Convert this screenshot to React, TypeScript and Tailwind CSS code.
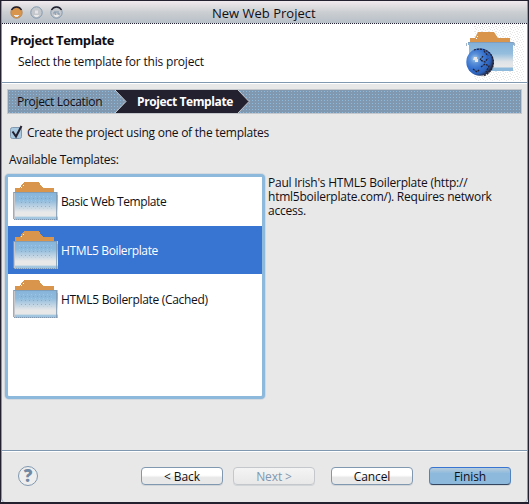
import React from "react";

function Folder({ className = "" }: { className?: string }) {
  return (
    <svg className={className} width="48" height="40" viewBox="0 0 48 40" shapeRendering="crispEdges">
      <defs>
        <linearGradient id="folderFront" x1="0" y1="0" x2="0" y2="1">
          <stop offset="0" stopColor="#86b4da" />
          <stop offset="0.3" stopColor="#8fbbdd" />
          <stop offset="0.72" stopColor="#e8e8e8" />
          <stop offset="0.86" stopColor="#e8e8e8" />
          <stop offset="0.9" stopColor="#a5c8e0" />
          <stop offset="1" stopColor="#9cc1de" />
        </linearGradient>
        <pattern id="folderGrain" width="4" height="4" patternUnits="userSpaceOnUse">
          <rect width="1" height="1" fill="#8098b0" />
          <rect x="2" y="2" width="1" height="1" fill="#c4c8cc" />
        </pattern>
      </defs>
      <path d="M2 10V6h5l2-4 2-2h14l2 2 3 4h11v4z" fill="#d8954b" />
      <rect x="1" y="10" width="44" height="28" fill="url(#folderFront)" />
      <rect x="6" y="14" width="34" height="13" fill="url(#folderGrain)" opacity=".6" />
      <path d="M0 10.500h45M0.500 11v26M43.500 11v26" stroke="#8098b0" strokeOpacity=".8" fill="none" />
      <path d="M44.500 10v3M1.500 11v26" stroke="#c4c8cc" />
      <path d="M1 37.500h43" stroke="#8098b0" strokeDasharray="1 1" />
      <path d="M10 3h1v1h-1zM8 5h1v1H8z" fill="#fff" />
    </svg>
  );
}

function ProjectIcon() {
  return (
    <svg width="58" height="57" viewBox="0 0 58 57">
      <defs>
        <linearGradient id="projectFront" x1="0" y1="0" x2="0" y2="1">
          <stop offset="0" stopColor="#80afd8" />
          <stop offset=".4" stopColor="#94bddd" />
          <stop offset=".68" stopColor="#dfe3e7" />
          <stop offset=".86" stopColor="#e8e8e8" />
          <stop offset=".9" stopColor="#8cb9dc" />
        </linearGradient>
        <radialGradient id="globe" cx=".32" cy=".38" r=".7">
          <stop offset="0" stopColor="#a8cde8" />
          <stop offset=".25" stopColor="#5b91d8" />
          <stop offset=".5" stopColor="#3874d1" />
          <stop offset=".8" stopColor="#2c60b8" />
          <stop offset="1" stopColor="#232030" />
        </radialGradient>
        <pattern id="speckle" width="7" height="5" patternUnits="userSpaceOnUse">
          <path d="M0 0h1v1H0zM3 0h1v1H3zM5 1h1v1H5zM1 2h2v1H1zM4 3h1v1H4zM6 3h1v1H6zM2 4h1v1H2z" fill="#e8e8e8" />
        </pattern>
      </defs>
      <rect x="8" width="50" height="57" fill="url(#speckle)" shapeRendering="crispEdges" />
      <g transform="translate(0 8)">
        <path d="M4 11V6h5l3-6h16l4 6h12v5z" fill="#d8954b" />
        <path d="M2 10h46v3h-1v26H3V13H2z" fill="url(#projectFront)" />
        <path d="M2 10.500h45M.5 11v3M48.500 11v3" stroke="#8098b0" opacity=".7" />
        <circle cx="14" cy="30" r="13.700" fill="url(#globe)" />
        <path d="M8 18c6-2 16-1 19 9 2 8-3 15-10 17M17 24l-3 4 5 2 3-4M15 35l4-3 4 2-3 6M7 37l4 3 2-2M18 19l4 5" fill="none" stroke="#232030" strokeWidth="1.200" strokeDasharray="2 1" />
        <path d="M8 25h3v2h1v3H9v-2H7z" fill="#e8e8e8" />
        <path d="M11 4h1v1h-1zM10 6h1v1h-1z" fill="#fff" />
      </g>
    </svg>
  );
}

function Light({ orange = false, dark = false }: { orange?: boolean; dark?: boolean }) {
  return (
    <svg width="13" height="13" viewBox="0 0 13 13">
      <circle cx="6.500" cy="6.500" r="5.700" fill={orange ? "#d8954b" : "#c4c8cc"} stroke={orange ? "#b0895f" : "#8098b0"} />
      {(orange || dark) && <path d="M1.500 4a5.700 5.700 0 0 1 10 0" fill="none" stroke="#232030" strokeWidth="1.500" />}
      <path d="M4 9.500h5M5 10.500h3" stroke="#e8e8e8" />
      {dark && <path d="M4 8v-2h3M8 5v3h2" stroke="#8098b0" fill="none" />}
      {dark && <path d="M5.500 6v3" stroke="#d8954b" />}
      {!orange && !dark && <path d="M5 4.500h3v3H5z" fill="#e4e4e6" />}
    </svg>
  );
}

function TemplateRow({ label, selected = false, tracking }: { label: string; selected?: boolean; tracking: string }) {
  return (
    <div className={`flex h-[49px] items-start border-b border-white ${selected ? "bg-[#3874d1] text-white" : "bg-white"}`}>
      <Folder className="ml-[5px] mt-[5px] shrink-0" />
      <span className={`mt-[17px] leading-4 ${tracking}`}>{label}</span>
    </div>
  );
}

function PushButton({ label, kind = "normal" }: { label: string; kind?: "normal" | "disabled" | "primary" }) {
  const look = {
    normal: "border-[#8098b0] bg-linear-to-b from-white from-45% to-[#e8e8e8] to-60%",
    disabled: "border-[#c4c8cc] bg-linear-to-b from-[#f4f4f4] to-[#e8e8e8] text-[#8098b0]",
    primary: "border-[#5182bd] border-t-[#3874d1] border-b-[#34465f] bg-linear-to-b from-[#b7cbdc] via-[#8cb9dc] via-35% to-[#8cb9dc]",
  }[kind];
  return <button className={`h-[18px] w-[82px] rounded-[4px] border text-center leading-[17px] tracking-[-0.1px] shadow-[0_1px_0_#d2d5d8] ${look}`}>{label}</button>;
}

export default function App() {
  return (
    <div className="flex h-[504px] w-[529px] flex-col overflow-hidden border-x border-t border-b-2 border-[#232030] bg-[#e8e8e8] font-['Open_Sans','Noto_Sans',sans-serif] text-[12px] text-[#100f16]">
      <div className="flex min-h-0 flex-1 flex-col rounded-b-[4px] border-x border-[#8098b0]">
        <header className="relative flex h-[23px] shrink-0 items-center border-b border-dotted border-[#232030] bg-linear-to-b from-[#f0eaee] via-[#cccfd2] via-50% to-[#b7bfc8] pl-2 pt-px">
          <div className="flex gap-[7px]"><Light orange /><Light /><Light dark /></div>
          <h1 className="absolute left-[210px] top-[3px] text-[13px] leading-[18px]">New Web Project</h1>
        </header>
        <section className="flex h-[59px] shrink-0 justify-between border-b border-[#8098b0] bg-white">
          <div>
            <h2 className="ml-2 mt-[7px] text-[13px] font-bold leading-[18px] tracking-[-0.42px]">Project Template</h2>
            <p className="ml-4 mt-[5px] leading-4 tracking-[-0.2px]">Select the template for this project</p>
          </div>
          <div className="mr-[3px]"><ProjectIcon /></div>
        </section>
        <main className="h-[367px] shrink-0 border-t border-white pl-[5px]">
          <nav className="relative mt-[5px] h-[25px] w-[515px] border border-[#c4c8cc] bg-[#8098b0] bg-[radial-gradient(circle,#8cb9dc_35%,transparent_36%)] bg-[length:3px_3px]">
            <svg className="absolute left-0 top-0" width="245" height="23">
              <path d="M107 0h123l11 11.500L230 23H107l11-11.500z" fill="#232030" />
              <path d="M107 0l11 11.500L107 23M230 0l11 11.500L230 23" fill="none" stroke="#c4c8cc" />
            </svg>
            <div className="relative flex leading-[23px]">
              <span className="ml-[9px] w-[120px] tracking-[-0.3px]">Project Location</span>
              <span className="font-bold tracking-[-0.4px] text-white">Project Template</span>
            </div>
          </nav>
          <label className="mt-[11px] flex h-4 items-center">
            <svg className="relative -top-px ml-[2px]" width="16" height="16" viewBox="0 0 16 16">
              <rect x="1.500" y="3.500" width="11" height="11" rx="2" fill="#a9c9e1" stroke="#8098b0" />
              <path d="M3.500 7.500l3.500 5L12.500 2" fill="none" stroke="#232030" strokeWidth="2" />
            </svg>
            <span className="ml-[2px] leading-4 tracking-[-0.25px]">Create the project using one of the templates</span>
          </label>
          <div className="ml-[2px] mt-[11px] leading-4 tracking-[-0.25px]">Available Templates:</div>
          <div className="mt-[6px] flex">
            <div className="-ml-[2px] h-[225px] w-[260px] shrink-0 rounded-[4px] border-[3px] border-[#8cb9dc] bg-white shadow-[0_0_0_1px_#d3d9de]">
              <TemplateRow label="Basic Web Template" tracking="tracking-[-0.42px]" />
              <TemplateRow label="HTML5 Boilerplate" selected tracking="tracking-[-0.37px]" />
              <TemplateRow label="HTML5 Boilerplate (Cached)" tracking="tracking-[-0.31px]" />
            </div>
            <p className="ml-[3px] mt-[2px] whitespace-pre leading-[14px] tracking-[-0.23px]">{"Paul Irish's HTML5 Boilerplate (http://\nhtml5boilerplate.com/). Requires network\naccess."}</p>
          </div>
        </main>
        <footer className="flex flex-1 items-start border-t border-[#8098b0] pt-4 shadow-[inset_0_1px_0_#fff]">
          <button className="-mt-px ml-4 h-5 w-5 rounded-full border border-[#8098b0] bg-[#eee] text-[17px] font-extrabold leading-[18px] text-[#708aa5]">?</button>
          <div className="ml-[103px] flex gap-[10px]"><PushButton label="&lt; Back" /><PushButton label="Next &gt;" kind="disabled" /></div>
          <div className="ml-4 flex gap-4"><PushButton label="Cancel" /><PushButton label="Finish" kind="primary" /></div>
        </footer>
      </div>
    </div>
  );
}
